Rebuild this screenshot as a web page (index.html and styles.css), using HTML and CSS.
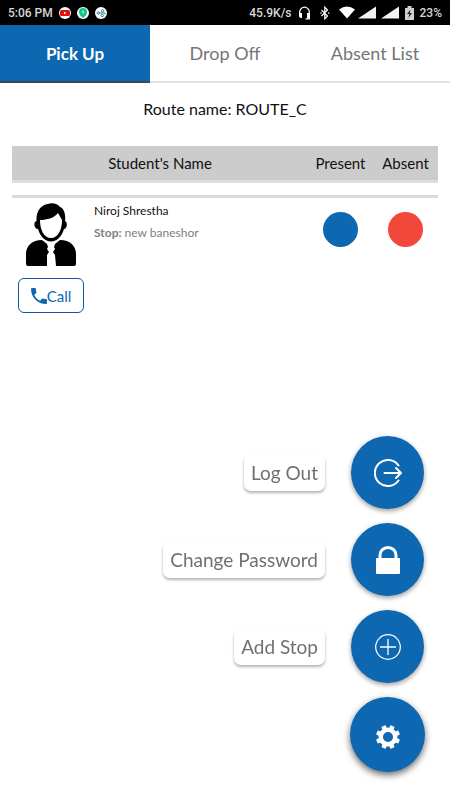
FILE: index.html
```html
<!DOCTYPE html>
<html lang="en">
<head>
  <meta charset="UTF-8">
  <meta name="viewport" content="width=device-width, initial-scale=1">
  <title>Pick Up</title>
  <link rel="stylesheet" href="styles.css">
</head>
<body>

  <div class="status-bar">
    <div class="status-group">
      <span class="clock">5:06 PM</span>
      <svg width="12" height="12" viewBox="0 0 12 12">
        <circle cx="6" cy="6" r="6" fill="#fff"/>
        <rect x="1" y="3" width="10" height="6" rx="1.500" fill="#e60f0f"/>
        <path d="M5 4.700L7.300 6L5 7.300z" fill="#fff"/>
      </svg>
      <svg class="badge" width="12" height="12" viewBox="0 0 12 12">
        <circle cx="6" cy="6" r="6" fill="#fff"/>
        <path d="M6 1a4 4 0 0 1 4 4c0 3-2 4-4 6C4 9 2 8 2 5a4 4 0 0 1 4-4z" fill="#12c48b"/>
        <path d="M6 3.500v3" stroke="#fff"/>
      </svg>
      <svg width="12" height="12" viewBox="0 0 12 12">
        <circle cx="6" cy="6" r="6" fill="#fff"/>
        <g fill="none" stroke="#2a8296">
          <circle cx="3.300" cy="6" r="1.200"/>
          <circle cx="7.600" cy="3.800" r="1.200"/>
          <circle cx="7.200" cy="8.500" r="1.200"/>
          <path d="M4.500 6h5.500v1.500"/>
        </g>
      </svg>
    </div>
    <div class="status-group">
      <span>45.9K/s</span>
      <svg width="13" height="14" viewBox="0 0 13 14">
        <path d="M1.700 9V6a4.800 4.800 0 0 1 9.600 0v6.800H7.500" fill="none" stroke="#fff" stroke-width="1.300"/>
        <path d="M1 7h3v5H2.500L1 10.500zM9 7h3v5H9z" fill="#fff"/>
      </svg>
      <svg class="bluetooth" width="10" height="14" viewBox="0 0 10 14">
        <path d="M1.500 4l6 6-2.700 2.800V1.200L7.500 4l-6 6" fill="none" stroke="#fff" stroke-width="1.200"/>
        <circle cx="1" cy="7" r=".8" fill="#fff"/>
        <circle cx="8.700" cy="7" r=".8" fill="#fff"/>
      </svg>
      <svg width="60" height="13" viewBox="0 0 60 13">
        <path d="M0 3.500Q8-2.500 16 3.500L8 12.500z" fill="#fff"/>
        <path d="M37 .5v12H19zM60 .5v12H42z" fill="#f2f2f2"/>
      </svg>
      <svg width="9" height="14" viewBox="0 0 9 14">
        <path d="M0 2h2.500V0h4v2H9v12H0z" fill="#d0d0d0"/>
        <path d="M5.500 3.500L2 8h2.300L3.500 12 7 7H4.800z" fill="#222"/>
      </svg>
      <span>23%</span>
    </div>
  </div>

  <nav class="tabs">
    <button type="button" class="tab active">Pick Up</button>
    <button type="button" class="tab">Drop Off</button>
    <button type="button" class="tab">Absent List</button>
  </nav>

  <main>
    <p class="route">Route name: ROUTE_C</p>

    <table class="students">
      <thead>
        <tr>
          <th scope="col">Student's Name</th>
          <th scope="col" class="mark">Present</th>
          <th scope="col" class="mark">Absent</th>
        </tr>
      </thead>
      <tbody>
        <tr>
          <td>
            <div class="student">
              <div class="contact">
                <svg width="50" height="63" viewBox="0 0 50 63">
                  <path d="M2 63Q0 63 0 61V51C0 43 6 37 16 37l5 4 1 3-1 2 2 3-2 3 0 11z"/>
                  <path d="M48 63q2 0 2-2V51C50 43 44 37 34 37l-5 4-1 3 1 2-2 3 2 3 1 11z"/>
                  <path d="M10.500 18C10 9 14 2 22 1c4-2 10 0 12 3 4 1 6 8 5 14 3 1 2 8-1 8-2 7-7 12.500-13 12.500S14 33 12 26c-4 0-5-7-1.500-8z"/>
                  <path d="M14 17c7 0 14-2 18-7l4 7c0 10-4 18-11 18S14 27 14 17z" fill="#fff"/>
                </svg>
                <a class="call" href="tel:">
                  <svg width="16" height="16" viewBox="3 3 18 18">
                    <path d="M6.620 10.790c1.440 2.830 3.760 5.140 6.590 6.590l2.200-2.200c.27-.27.67-.36 1.020-.24 1.120.37 2.330.57 3.570.57.55 0 1 .45 1 1V20c0 .55-.45 1-1 1C10.610 21 3 13.390 3 4c0-.55.45-1 1-1h3.500c.55 0 1 .45 1 1 0 1.250.2 2.450.57 3.570.11.35.03.74-.25 1.020z" fill="currentColor"/>
                  </svg>Call
                </a>
              </div>
              <div class="details">
                <p class="name">Niroj Shrestha</p>
                <p class="stop"><b>Stop:</b> new baneshor</p>
              </div>
            </div>
          </td>
          <td class="mark"><button type="button" class="dot present" aria-label="Present"></button></td>
          <td class="mark"><button type="button" class="dot absent" aria-label="Absent"></button></td>
        </tr>
      </tbody>
    </table>
  </main>

  <!-- floating menu -->
  <div class="fab-menu">
    <div class="fab-row">
      <label class="fab-label" for="logout">Log Out</label>
      <button type="button" class="fab" id="logout">
        <svg width="28" height="28" viewBox="0 0 28 28" fill="none" stroke="#fff" stroke-width="2" stroke-linecap="round" stroke-linejoin="round">
          <path d="M24.500 6.500A13 13 0 1 0 24.500 21.500"/>
          <path d="M10.500 14H27M22 9l5 5-5 5"/>
        </svg>
      </button>
    </div>
    <div class="fab-row">
      <label class="fab-label" for="password">Change Password</label>
      <button type="button" class="fab" id="password">
        <svg width="24" height="28" viewBox="0 0 24 28">
          <path d="M4 13V9a8 7.500 0 0 1 16 0v4" fill="none" stroke="#fff" stroke-width="3"/>
          <rect x="0" y="12" width="24" height="16" rx="1" fill="#fff"/>
        </svg>
      </button>
    </div>
    <div class="fab-row">
      <label class="fab-label" for="addstop">Add Stop</label>
      <button type="button" class="fab" id="addstop">
        <svg width="26" height="26" viewBox="0 0 26 26" fill="none" stroke="#fff">
          <circle cx="13" cy="13" r="12.300" stroke-width="1.200"/>
          <path d="M13 5v16M5 13h16" stroke-width="1.300"/>
        </svg>
      </button>
    </div>
    <button type="button" class="fab fab-main" aria-label="Settings">
      <svg width="24" height="24" viewBox="0 0 24 24">
        <g fill="#fff">
          <path fill-rule="evenodd" d="M12 2.500a9.500 9.500 0 1 0 0 19 9.500 9.500 0 0 0 0-19zm0 4.500a5 5 0 1 1 0 10 5 5 0 0 1 0-10z"/>
          <g id="teeth">
            <rect x="9.700" y="0" width="4.600" height="4" rx="1" transform="rotate(22.500 12 12)"/>
            <rect x="9.700" y="0" width="4.600" height="4" rx="1" transform="rotate(67.500 12 12)"/>
            <rect x="9.700" y="0" width="4.600" height="4" rx="1" transform="rotate(112.500 12 12)"/>
            <rect x="9.700" y="0" width="4.600" height="4" rx="1" transform="rotate(157.500 12 12)"/>
          </g>
          <use href="#teeth" transform="rotate(180 12 12)"/>
        </g>
      </svg>
    </button>
  </div>

</body>
</html>
```
FILE: styles.css
```css
* {
  box-sizing: border-box;
}

body {
  margin: 0;
  background: #fff;
  color: #111;
  font-family: Lato, sans-serif;
}

p {
  margin: 0;
}

button {
  border: none;
  padding: 0;
  font-family: inherit;
  cursor: pointer;
}

.status-bar {
  display: flex;
  justify-content: space-between;
  align-items: center;
  height: 25px;
  padding: 0 8px;
  background: #000;
  color: #d8d8d8;
  font: 500 12px Roboto, sans-serif;
}

.status-group {
  display: flex;
  align-items: center;
  gap: 6px;
}

.bluetooth {
  margin: 0 3px;
}

.tabs {
  display: flex;
}

.tab {
  flex: 1;
  height: 58px;
  background: #fff;
  border-bottom: 2px solid #e2e2e2;
  color: #757575;
  font-size: 18px;
}

.tab.active {
  background: #0d67b1;
  border-bottom-color: #3f464d;
  color: #fff;
  font-size: 17px;
  font-weight: bold;
}

main {
  padding: 14px 12px;
}

.route {
  font-size: 16px;
  line-height: 24px;
  text-align: center;
}

.students {
  width: 100%;
  margin-top: 25px;
  border-spacing: 0;
  table-layout: fixed;
}

.students th {
  height: 37px;
  padding: 0;
  background: #ccc;
  background-clip: padding-box;
  border-bottom: 3px solid #dedede;
  font-size: 15px;
  font-weight: normal;
}

/* gap between the header and the first row */
.students thead::after {
  content: "";
  display: block;
  height: 12px;
}

.students td {
  padding: 5px 0;
  border-top: 3px solid #dadada;
  vertical-align: top;
}

.students .mark {
  width: 65px;
  text-align: center;
}

.student {
  display: flex;
  gap: 10px;
  padding-left: 6px;
}

.contact {
  display: flex;
  flex-direction: column;
  align-items: center;
  gap: 12px;
}

.call {
  display: flex;
  justify-content: center;
  align-items: center;
  width: 66px;
  height: 35px;
  border: 1px solid #0d55a8;
  border-radius: 6px;
  color: #0d67b1;
  font-size: 15px;
  text-decoration: none;
}

.name,
.stop {
  font-size: 12px;
  line-height: 22px;
}

.details {
  margin-top: -3px;
}

.stop {
  color: #808080;
}

.dot {
  width: 35px;
  height: 35px;
  margin-top: 9px;
  border-radius: 50%;
}

.present {
  background: #0d67b1;
}

.absent {
  background: #f2483a;
}

.fab-menu {
  position: fixed;
  right: 25px;
  bottom: 28px;
  display: flex;
  flex-direction: column;
  align-items: flex-end;
  gap: 14px;
}

.fab-row {
  display: flex;
  align-items: center;
  gap: 26px;
  padding-right: 1px;
}

.fab-label {
  padding: 0 7px;
  border-radius: 7px;
  background: #fff;
  box-shadow: 0 2px 3px rgba(0, 0, 0, 0.3);
  color: #707070;
  font-size: 19px;
  line-height: 37px;
}

.fab {
  display: flex;
  justify-content: center;
  align-items: center;
  width: 73px;
  height: 73px;
  border-radius: 50%;
  background: #0d67b1;
  box-shadow: 0 2px 5px rgba(0, 0, 0, 0.4);
}

.fab-main {
  width: 75px;
  height: 75px;
  padding-top: 4px;
  box-shadow: 0 3px 7px rgba(0, 0, 0, 0.6);
}
```
